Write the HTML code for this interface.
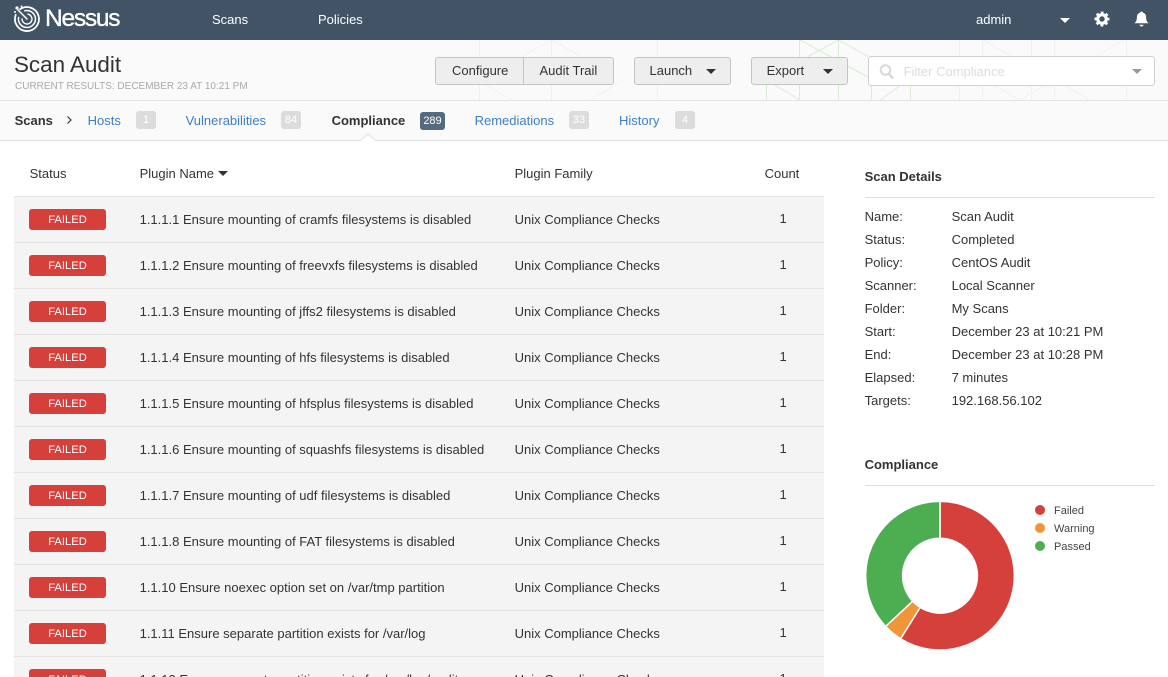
<!DOCTYPE html>
<html lang="en"><head><meta charset="utf-8"><title>Scan Audit</title>
<style>
*{box-sizing:border-box}
html,body{margin:0;padding:0;width:1168px;height:677px;overflow:hidden;background:#fff}
body{font:13px/16px "Liberation Sans",sans-serif;color:#333;position:relative}
.a{position:absolute;white-space:nowrap}
#top{position:absolute;left:0;top:0;width:1168px;height:40px;background:#415364;color:#fff}
#sub{position:absolute;left:0;top:40px;width:1168px;height:61px;background:#fafafa;border-bottom:1px solid #e2e2e2}
#tabs{position:absolute;left:0;top:101px;width:1168px;height:40px;background:#fafafa;border-bottom:1px solid #e2e2e2}
.btn{position:absolute;top:57px;height:28px;background:#eee;border:1px solid #c4c4c4;border-radius:3px;line-height:26px;text-align:left;color:#333}
.car{position:absolute;width:0;height:0;border-left:5px solid transparent;border-right:5px solid transparent;border-top:5px solid #333}
.t{position:absolute;top:113px;line-height:16px;color:#3d80c8}
.n{position:absolute;top:111px;height:18px;background:#dcdcdc;color:#fff;border-radius:3px;text-align:center;font-size:11px;line-height:19px}
.row{position:absolute;left:14px;width:810px;height:46px;background:#f4f4f4;border-bottom:1px solid #e4e4e4}
.f{position:absolute;left:15px;top:12px;width:77px;height:21px;background:#d5403b;border-radius:3px;color:#fff;text-align:center;font-size:11.200px;line-height:22px}
.p{position:absolute;left:125.6px;top:15px;white-space:nowrap}
.y{position:absolute;left:500.6px;top:15px;white-space:nowrap}
.c{position:absolute;left:765.5px;top:14px}
.k{position:absolute;left:864.6px}
.v{position:absolute;left:951.6px}
.lg{position:absolute;left:1054px;font-size:11px;line-height:14px;color:#444}
.d{position:absolute;left:1035px;width:10px;height:10px;border-radius:50%}
</style></head><body>

<div id="top">
<svg class="a" style="left:12px;top:4px" width="30" height="30" viewBox="0 0 30 30" fill="none" stroke="#fff" stroke-linecap="round">
<path d="M8.100 5.200A12 12 0 1 1 3.700 10.900" stroke-width="1.800"/>
<path d="M12.800 6.800A8.500 8.500 0 1 1 6.600 13.500" stroke-width="1.500"/>
<path d="M15.900 10.100A5 5 0 1 1 10 15" stroke-width="1.400"/>
<path d="M6 6L15 15" stroke-width="1.500"/>
<circle cx="5" cy="4" r="1.600" fill="#fff" stroke="none"/><circle cx="9.500" cy="2.500" r="1" fill="#fff" stroke="none"/><circle cx="3" cy="8" r="1" fill="#fff" stroke="none"/>
</svg>
<div class="a" style="left:45px;top:4px;font-size:24.500px;line-height:30px;letter-spacing:-1.250px;color:#fff;-webkit-text-stroke:.35px #fff">Nessus</div>
<div class="a" style="left:212px;top:12px">Scans</div>
<div class="a" style="left:318px;top:12px">Policies</div>
<div class="a" style="left:976px;top:12px">admin</div>
<div class="car" style="left:1060px;top:18px;border-top-color:#fff"></div>
<svg class="a" style="left:1094px;top:11px" width="16" height="16" viewBox="0 0 16 16" fill="none" stroke="#fff">
<circle cx="8" cy="8" r="4.300" stroke-width="3.200"/>
<circle cx="8" cy="8" r="6.500" stroke-width="2" stroke-dasharray="2.800 2.300" stroke-dashoffset="1.400"/>
</svg>
<svg class="a" style="left:1134px;top:11px" width="15" height="16" viewBox="0 0 15 16" fill="#fff">
<path d="M7.500 0.500c.9 0 1.400.5 1.400 1.200 2.400.5 3.200 2.400 3.200 4.600 0 3 .9 4.500 2.400 6H.5c1.500-1.500 2.400-3 2.400-6 0-2.200.8-4.100 3.200-4.600C6.100 1 6.600.5 7.500.5zM5.500 13.800h4c0 1-.9 1.700-2 1.700s-2-.7-2-1.700z"/>
</svg>
</div>

<div id="sub">
<svg class="a" style="left:0;top:0" width="1168" height="60" viewBox="0 40 1168 60" fill="none" stroke-width="1">
<g stroke="#f1f1f1">
<path d="M479.500 40V100M551.500 40V100M657.500 40V100M522 56.500L551.500 40L581.500 56.500M485 84.500L511.500 100M622.500 80.500L590 100"/>
<path d="M959.500 40V100M982.500 40V100M1031.500 40V100M1054.500 40V100M1126.500 40V100M982.500 40L1011.500 56M1124 40L1096.500 56M993 85L1020 100L1045 85.500M1065 85.500L1090 100"/>
</g>
<g stroke="#d9edd5">
<path d="M766.500 85V100M799.500 40V100M838.500 40V100M871.500 85V100M910.500 85V100M800 40L868 77M838.500 40L808 56.500M838.500 40L868 56.500M773 84L800 100M880 100L901 85"/>
</g>
</svg>
</div>
<div class="a" style="left:14px;top:52px;font-size:22.400px;line-height:26px;color:#333">Scan Audit</div>
<div class="a" style="left:15px;top:80px;font-size:10px;line-height:13px;color:#aaa">CURRENT RESULTS: DECEMBER 23 AT 10:21 PM</div>

<div class="btn" style="left:435px;width:89px;border-radius:3px 0 0 3px;padding-left:16px">Configure</div>
<div class="btn" style="left:523px;width:91px;border-radius:0 3px 3px 0;padding-left:15.500px">Audit Trail</div>
<div class="btn" style="left:634px;width:97px;padding-left:14.500px">Launch<span class="car" style="left:71px;top:11px"></span></div>
<div class="btn" style="left:751px;width:97px;padding-left:14.600px">Export<span class="car" style="left:71px;top:11px"></span></div>
<div class="a" style="left:868px;top:56px;width:287px;height:30px;background:#fff;border:1px solid #d0d0d0;border-radius:3px"></div>
<svg class="a" style="left:879px;top:63px" width="16" height="18" viewBox="0 0 16 18" fill="none" stroke="#d8d8d8" stroke-width="2"><circle cx="6.500" cy="7" r="4.800"/><path d="M10 11L14 15.500" stroke-width="2.500"/></svg>
<div class="a" style="left:903.600px;top:64px;color:#ddd">Filter Compliance</div>
<div class="car" style="left:1132px;top:69px;border-top-color:#999"></div>

<div id="tabs"></div>
<div class="a" style="left:14.600px;top:113px;font-weight:bold;color:#333">Scans</div>
<svg class="a" style="left:66px;top:115px" width="8" height="10" viewBox="0 0 8 10" fill="none" stroke="#333" stroke-width="1.200"><path d="M1.500 1.500L5 5L1.500 8.500"/></svg>
<div class="t" style="left:87.600px">Hosts</div><div class="n" style="left:136px;width:20px">1</div>
<div class="t" style="left:185.600px">Vulnerabilities</div><div class="n" style="left:281px;width:20px">84</div>
<div class="a" style="left:331.600px;top:113px;font-weight:bold;color:#333">Compliance</div><div class="n" style="left:420px;top:112px;width:25px;background:#546a7f">289</div>
<div class="t" style="left:474.600px">Remediations</div><div class="n" style="left:569px;width:20px">33</div>
<div class="t" style="left:619px">History</div><div class="n" style="left:675px;width:20px">4</div>
<svg class="a" style="left:360px;top:133px" width="16" height="9" viewBox="0 0 16 9"><path d="M0 8L8 .7L16 8" fill="#fff" stroke="#e2e2e2"/><path d="M1 9H15V8H1z" fill="#fff"/></svg>

<div class="a" style="left:29.600px;top:166px">Status</div>
<div class="a" style="left:139.600px;top:166px">Plugin Name</div>
<div class="car" style="left:218px;top:171px"></div>
<div class="a" style="left:514.600px;top:166px">Plugin Family</div>
<div class="a" style="left:764.600px;top:166px">Count</div>
<div class="a" style="left:14px;top:196px;width:810px;height:1px;background:#e4e4e4"></div>

<div class="row" style="top:197px"><div class="f">FAILED</div><div class="p">1.1.1.1 Ensure mounting of cramfs filesystems is disabled</div><div class="y">Unix Compliance Checks</div><div class="c">1</div></div>
<div class="row" style="top:243px"><div class="f">FAILED</div><div class="p">1.1.1.2 Ensure mounting of freevxfs filesystems is disabled</div><div class="y">Unix Compliance Checks</div><div class="c">1</div></div>
<div class="row" style="top:289px"><div class="f">FAILED</div><div class="p">1.1.1.3 Ensure mounting of jffs2 filesystems is disabled</div><div class="y">Unix Compliance Checks</div><div class="c">1</div></div>
<div class="row" style="top:335px"><div class="f">FAILED</div><div class="p">1.1.1.4 Ensure mounting of hfs filesystems is disabled</div><div class="y">Unix Compliance Checks</div><div class="c">1</div></div>
<div class="row" style="top:381px"><div class="f">FAILED</div><div class="p">1.1.1.5 Ensure mounting of hfsplus filesystems is disabled</div><div class="y">Unix Compliance Checks</div><div class="c">1</div></div>
<div class="row" style="top:427px"><div class="f">FAILED</div><div class="p">1.1.1.6 Ensure mounting of squashfs filesystems is disabled</div><div class="y">Unix Compliance Checks</div><div class="c">1</div></div>
<div class="row" style="top:473px"><div class="f">FAILED</div><div class="p">1.1.1.7 Ensure mounting of udf filesystems is disabled</div><div class="y">Unix Compliance Checks</div><div class="c">1</div></div>
<div class="row" style="top:519px"><div class="f">FAILED</div><div class="p">1.1.1.8 Ensure mounting of FAT filesystems is disabled</div><div class="y">Unix Compliance Checks</div><div class="c">1</div></div>
<div class="row" style="top:565px"><div class="f">FAILED</div><div class="p">1.1.10 Ensure noexec option set on /var/tmp partition</div><div class="y">Unix Compliance Checks</div><div class="c">1</div></div>
<div class="row" style="top:611px"><div class="f">FAILED</div><div class="p">1.1.11 Ensure separate partition exists for /var/log</div><div class="y">Unix Compliance Checks</div><div class="c">1</div></div>
<div class="row" style="top:657px"><div class="f">FAILED</div><div class="p">1.1.12 Ensure separate partition exists for /var/log/audit</div><div class="y">Unix Compliance Checks</div><div class="c">1</div></div>

<div class="k" style="top:169px;font-weight:bold">Scan Details</div>
<div class="a" style="left:865px;top:197px;width:290px;height:1px;background:#ddd"></div>
<div class="k" style="top:209px">Name:</div><div class="v" style="top:209px">Scan Audit</div>
<div class="k" style="top:232px">Status:</div><div class="v" style="top:232px">Completed</div>
<div class="k" style="top:255px">Policy:</div><div class="v" style="top:255px">CentOS Audit</div>
<div class="k" style="top:278px">Scanner:</div><div class="v" style="top:278px">Local Scanner</div>
<div class="k" style="top:301px">Folder:</div><div class="v" style="top:301px">My Scans</div>
<div class="k" style="top:324px">Start:</div><div class="v" style="top:324px">December 23 at 10:21 PM</div>
<div class="k" style="top:347px">End:</div><div class="v" style="top:347px">December 23 at 10:28 PM</div>
<div class="k" style="top:370px">Elapsed:</div><div class="v" style="top:370px">7 minutes</div>
<div class="k" style="top:393px">Targets:</div><div class="v" style="top:393px">192.168.56.102</div>

<div class="k" style="top:457px;font-weight:bold">Compliance</div>
<div class="a" style="left:865px;top:485px;width:290px;height:1px;background:#ddd"></div>

<svg class="a" style="left:860px;top:495px" width="160" height="160" viewBox="860 495 160 160" stroke="#fff" stroke-width="1.500">
<path fill="#d5403b" d="M940 501.400A74.300 74.300 0 1 1 900.630 638.700L920.180 607.400A37.400 37.400 0 1 0 940 538.300Z"/>
<path fill="#f0953a" d="M900.630 638.700A74.300 74.300 0 0 1 885.660 626.370L912.650 601.200A37.400 37.400 0 0 0 920.180 607.400Z"/>
<path fill="#4cae50" d="M885.660 626.370A74.300 74.300 0 0 1 940 501.400V538.300A37.400 37.400 0 0 0 912.650 601.200Z"/>
</svg>

<div class="d" style="top:505px;background:#d5403b"></div><div class="lg" style="top:504px">Failed</div>
<div class="d" style="top:523px;background:#f0953a"></div><div class="lg" style="top:522px">Warning</div>
<div class="d" style="top:541px;background:#4cae50"></div><div class="lg" style="top:540px">Passed</div>
</body></html>
